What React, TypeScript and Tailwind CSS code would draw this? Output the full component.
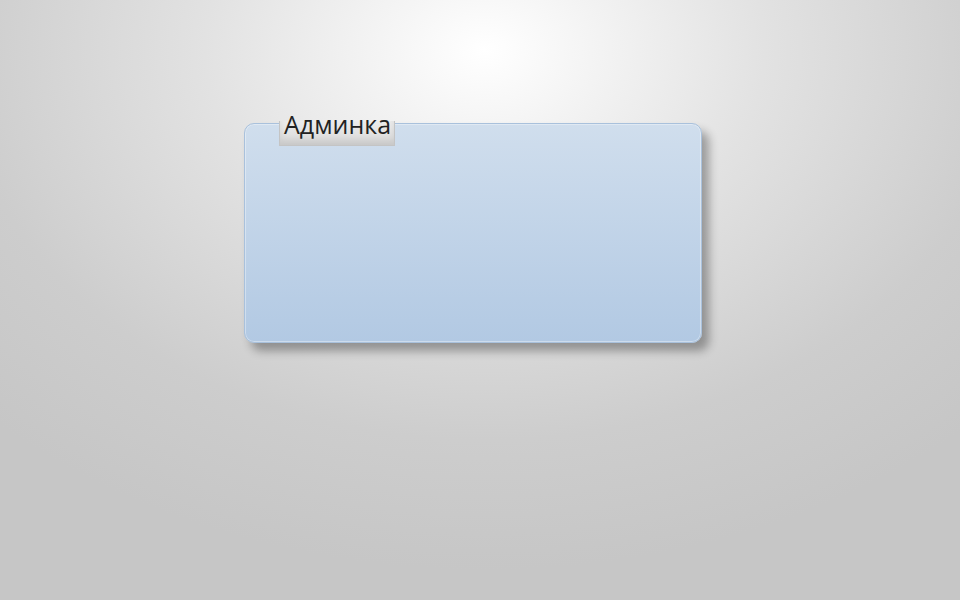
export default function App() {
  return (
    <div className="h-[600px] w-full overflow-hidden bg-[radial-gradient(ellipse_700px_520px_at_485px_50px,#ffffff_0%,#e2e2e2_40%,#cdcdcd_75%,#c6c6c6_100%)] pl-[244px] pt-[123px] font-['Open_Sans',sans-serif]">
      {/* Panel */}
      <div className="relative h-[220px] w-[458px] rounded-[10px] border border-[#a9c1dc] bg-gradient-to-b from-[#d0deed] to-[#b2c9e3] shadow-[inset_0_0_0_1px_rgba(255,255,255,0.35),7px_8px_10px_rgba(0,0,0,0.32)]">
        <div className="absolute left-[34px] top-[-3px] flex h-[25px] w-[116px] items-end border-x border-b border-[#c4c4c4] bg-gradient-to-b from-[#ececec] to-[#d9d9d9] shadow-[inset_0_-5px_6px_rgba(0,0,0,0.08)]">
          <span className="mb-[9px] ml-[4px] text-[25px] leading-[24px] text-[#222]">Админка</span>
        </div>
      </div>
    </div>
  );
}
